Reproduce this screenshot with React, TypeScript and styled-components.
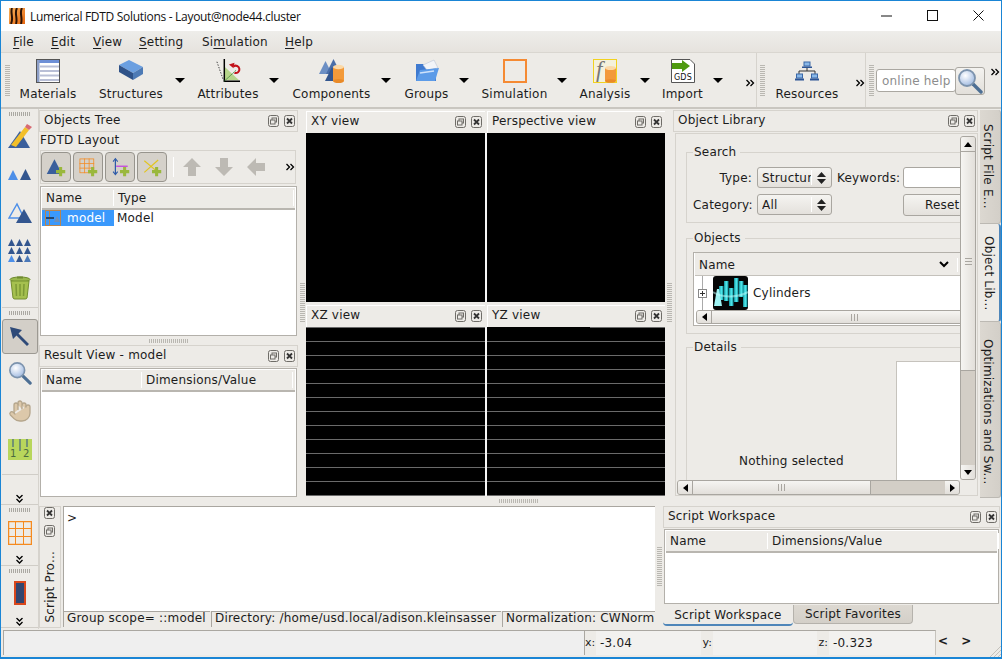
import React from 'react';
import styled, { createGlobalStyle } from 'styled-components';
import { Hand } from 'lucide-react';

const GlobalStyle = createGlobalStyle`
  html, body { margin: 0; padding: 0; background: #edebe7; overflow: hidden; }
  * { box-sizing: border-box; }
`;

const bg = '#edebe7';
const line = '#b3b0aa';
const soft = '#d6d3cd';

const Window = styled.div`
  width: 1002px;
  height: 659px;
  display: flex;
  flex-direction: column;
  overflow: hidden;
  border: 1px solid #1a85d5;
  border-bottom-width: 2px;
  background: ${bg};
  color: #1c1c1c;
  font: 12px/14px 'DejaVu Sans', sans-serif;
  letter-spacing: 0.2px;
`;

const TitleBar = styled.div`
  height: 30px;
  flex: none;
  display: flex;
  align-items: center;
  padding-left: 8px;
  gap: 5px;
  background: #fff;
  font: 12px 'Open Sans', sans-serif;
  letter-spacing: -0.3px;
  color: #111;
`;

const TitleText = styled.span`
  flex: 1;
`;

const WindowControls = styled.div`
  display: flex;
  align-items: center;
  gap: 35px;
  padding: 0 17px 2px 0;
  svg { display: block; }
`;

const MenuBar = styled.div`
  height: 22px;
  flex: none;
  display: flex;
  align-items: center;
  padding-left: 12px;
  background: linear-gradient(#eeedea, #e6e3de);
  border-bottom: 1px solid #d9d6d0;
`;

const MenuItem = styled.span<{ $w: number }>`
  width: ${(p) => p.$w}px;
  u { text-underline-offset: 2px; }
`;

const ToolBar = styled.div`
  height: 56px;
  flex: none;
  display: flex;
  align-items: stretch;
  border-bottom: 2px solid #c9c6c0;
`;

const ToolSection = styled.div<{ $w: number }>`
  width: ${(p) => p.$w}px;
  flex: none;
  display: flex;
  align-items: flex-start;
  border-right: 1px solid ${soft};
`;

const GripV = styled.div<{ $h?: number }>`
  width: 5px;
  height: ${(p) => p.$h ?? 31}px;
  flex: none;
  background: repeating-linear-gradient(#b9b7b1 0 1px, transparent 1px 2px);
`;

const GripH = styled.div<{ $mt?: number }>`
  width: 22px;
  height: 4px;
  flex: none;
  margin-top: ${(p) => p.$mt ?? 0}px;
  background: repeating-linear-gradient(90deg, #aaa8a2 0 1px, transparent 1px 2px);
`;

const ToolGripSlot = styled.div<{ $pl: number }>`
  padding: 12px 0 0 ${(p) => p.$pl}px;
  flex: none;
`;

const ToolItem = styled.div<{ $w: number; $ml?: number }>`
  width: ${(p) => p.$w}px;
  margin-left: ${(p) => p.$ml ?? 0}px;
  flex: none;
  display: flex;
  flex-direction: column;
  align-items: center;
  padding-top: 6px;
  gap: 4px;
  white-space: nowrap;
`;

const IconSlot = styled.div`
  height: 24px;
  flex: none;
  display: flex;
  align-items: center;
  justify-content: center;
  svg { display: block; overflow: visible; }
`;

const ToolLabel = styled.span`
  line-height: 15px;
`;

const DropArrow = styled.div<{ $ml: number }>`
  width: 0;
  height: 0;
  flex: none;
  margin: 25px 0 0 ${(p) => p.$ml}px;
  border-left: 5px solid transparent;
  border-right: 5px solid transparent;
  border-top: 5px solid #000;
`;

const OverflowSlot = styled.div<{ $ml: number; $mt?: number }>`
  margin: ${(p) => p.$mt ?? 26}px 0 0 ${(p) => p.$ml}px;
  flex: none;
  line-height: 0;
`;

const HelpInput = styled.div`
  width: 80px;
  height: 23px;
  margin: 16px 0 0 2px;
  flex: none;
  background: #fff;
  border: 1px solid #aaa7a1;
  border-radius: 3px;
  color: #8d8d8d;
  line-height: 23px;
  padding-left: 5px;
  white-space: nowrap;
`;

const HelpButton = styled.div`
  width: 30px;
  height: 28px;
  margin: 14px 0 0 -1px;
  flex: none;
  display: flex;
  align-items: center;
  justify-content: center;
  border: 1px solid #aaa7a1;
  border-radius: 3px;
  background: linear-gradient(#f4f3f0, #e2dfda);
`;

const Main = styled.div`
  height: 520px;
  flex: none;
  display: flex;
`;

const LeftColumn = styled.div`
  width: 38px;
  flex: none;
  display: flex;
  flex-direction: column;
  border-right: 1px solid ${soft};
`;

const RailSection = styled.div<{ $h: number }>`
  height: ${(p) => p.$h}px;
  flex: none;
  display: flex;
  flex-direction: column;
  align-items: center;
  padding-top: 3px;
  border-bottom: 1px solid #d0cdc7;
`;

const RailTool = styled.div<{ $h: number; $mt?: number; $active?: boolean }>`
  width: 36px;
  height: ${(p) => p.$h}px;
  margin-top: ${(p) => p.$mt ?? 0}px;
  flex: none;
  display: flex;
  align-items: center;
  justify-content: center;
  border-radius: 3px;
  ${(p) => (p.$active ? `background: #d3cfc8; border: 1px solid #9c9992;` : '')}
`;

const RailDivider = styled.div<{ $my: number }>`
  width: 36px;
  height: 1px;
  flex: none;
  margin: ${(p) => p.$my}px 0;
  background: #d0cdc7;
`;

const RailChevron = styled.div`
  margin-top: auto;
  padding-bottom: 1px;
  line-height: 0;
`;

const Center = styled.div`
  flex: 1;
  display: flex;
  flex-direction: column;
  min-width: 0;
`;

const UpperRow = styled.div`
  height: 388px;
  flex: none;
  display: flex;
`;

const ObjectsColumn = styled.div`
  width: 259px;
  flex: none;
  display: flex;
  flex-direction: column;
  padding-top: 1px;
`;

const DockTitle = styled.div`
  height: 22px;
  flex: none;
  display: flex;
  align-items: center;
  justify-content: space-between;
  padding: 0 2px 3px 4px;
  background: ${bg};
  border: 1px solid ${soft};
  white-space: nowrap;
`;

const DockButtons = styled.div`
  display: flex;
  gap: 5px;
  margin-top: 2px;
  svg { display: block; }
`;

const SubLabel = styled.div`
  height: 18px;
  flex: none;
  padding: 1px 0 0 1px;
`;

const ObjectsToolRow = styled.div`
  width: 256px;
  height: 34px;
  flex: none;
  margin-left: 1px;
  display: flex;
  align-items: center;
  border: 1px solid ${soft};
`;

const AddButton = styled.div`
  width: 30px;
  height: 30px;
  margin-right: 2px;
  flex: none;
  display: flex;
  align-items: center;
  justify-content: center;
  background: #d5d1ca;
  border: 1px solid #97948d;
  border-radius: 4px;
`;

const ToolSep = styled.div`
  width: 1px;
  height: 20px;
  margin: 0 9px 0 4px;
  flex: none;
  background: #fff;
`;

const GreyArrow = styled.div`
  width: 18px;
  margin-right: 14px;
  flex: none;
  line-height: 0;
`;

const RowEnd = styled.div`
  margin-left: auto;
  line-height: 0;
`;

const Tree = styled.div<{ $h: number; $w?: number; $mt?: number }>`
  width: ${(p) => p.$w ?? 257}px;
  height: ${(p) => p.$h}px;
  flex: none;
  margin: ${(p) => p.$mt ?? 0}px 0 0 1px;
  padding: 1px;
  display: flex;
  flex-direction: column;
  background: #fff;
  border: 1px solid ${line};
`;

const TreeHeader = styled.div`
  height: 22px;
  flex: none;
  display: flex;
  align-items: center;
  background: ${bg};
  border-bottom: 2px solid #b9b6b0;
`;

const HeaderCell = styled.div<{ $w: number }>`
  width: ${(p) => p.$w}px;
  flex: none;
  padding-left: 4px;
  border-right: 1px solid #fff;
  line-height: 16px;
  white-space: nowrap;
`;

const ModelRow = styled.div`
  display: flex;
  height: 16px;
  align-items: center;
  line-height: 16px;
`;

const SelectedCell = styled.div`
  width: 72px;
  height: 16px;
  flex: none;
  display: flex;
  align-items: center;
  gap: 6px;
  padding-left: 3px;
  background: #3a99fc;
  color: #fff;
`;

const ModelType = styled.span`
  padding-left: 3px;
`;

const Splitter = styled.div<{ $w: number }>`
  width: ${(p) => p.$w}px;
  flex: none;
  display: flex;
  align-items: center;
  justify-content: center;
`;

const HSplitter = styled.div`
  height: 8px;
  flex: none;
  display: flex;
  align-items: center;
  justify-content: center;
  padding-right: 2px;
`;

const HGrip = styled.div`
  width: 40px;
  height: 4px;
  background: repeating-linear-gradient(90deg, #b9b7b1 0 1px, transparent 1px 2px);
`;

const SplitterRowGap = styled.div`
  height: 9px;
  flex: none;
  display: flex;
  align-items: center;
  justify-content: center;
`;

const Views = styled.div`
  width: 359px;
  flex: none;
  padding-top: 2px;
  display: grid;
  grid-template-columns: 181px 178px;
  grid-template-rows: 191px 191px;
  row-gap: 3px;
`;

const ViewCell = styled.div`
  display: flex;
  flex-direction: column;
  min-height: 0;
`;

const ViewTitle = styled.div<{ $left?: boolean }>`
  height: 22px;
  flex: none;
  display: flex;
  align-items: center;
  justify-content: space-between;
  padding: 0 3px 3px 4px;
  margin-right: ${(p) => (p.$left ? 2 : 0)}px;
  border-top: 1px solid #fff;
  border-left: 1px solid #fff;
  white-space: nowrap;
`;

const Canvas = styled.div<{ $left?: boolean; $ruled?: boolean; $partial?: boolean }>`
  flex: 1;
  position: relative;
  background-color: #000;
  ${(p) => (p.$left ? 'border-right: 2px solid #f6f6f6;' : '')}
  ${(p) =>
    p.$ruled
      ? `background-image: linear-gradient(#6a6a6a 0 1px, #000 1px);
         background-size: 100% 14px;`
      : ''}
  ${(p) =>
    p.$partial
      ? `&::before {
           content: '';
           position: absolute;
           left: 0; top: 0;
           width: 103px; height: 1px;
           background: #000;
         }`
      : ''}
`;

const Library = styled.div`
  width: 305px;
  flex: none;
  display: flex;
  flex-direction: column;
  padding-top: 1px;
`;

const LibraryBody = styled.div`
  height: 363px;
  margin: 1px 0 0 2px;
  padding: 2px 1px 0 1px;
  display: grid;
  grid-template-columns: 283px 16px;
  grid-template-rows: 344px 15px;
  border: 1px solid ${soft};
`;

const LibraryContent = styled.div`
  overflow: hidden;
  padding: 9px 0 0 9px;
  display: flex;
  flex-direction: column;
  gap: 8px;
`;

const Group = styled.fieldset<{ $h: number; $mt?: number }>`
  width: 300px;
  height: ${(p) => p.$h}px;
  flex: none;
  margin: ${(p) => p.$mt ?? 0}px 0 0;
  padding: 0 0 0 6px;
  border: 1px solid ${soft};
  min-inline-size: 0;
`;

const GroupLegend = styled.legend`
  padding: 0 4px 0 1px;
  line-height: 14px;
`;

const SearchGrid = styled.div`
  display: grid;
  grid-template-columns: 59px 75px 61px 100px;
  grid-auto-rows: 21px;
  column-gap: 5px;
  row-gap: 6px;
  margin-top: 8px;
  align-items: center;
`;

const FormLabel = styled.span`
  text-align: right;
  white-space: nowrap;
`;

const Combo = styled.div`
  height: 21px;
  display: flex;
  align-items: center;
  justify-content: space-between;
  padding-left: 4px;
  overflow: hidden;
  white-space: nowrap;
  border: 1px solid #a9a6a0;
  border-radius: 3px;
  background: linear-gradient(#f5f4f1, #e4e1dc);
`;

const ComboText = styled.span`
  width: 50px;
  overflow: hidden;
`;

const ComboArrows = styled.span`
  width: 20px;
  height: 15px;
  flex: none;
  display: flex;
  align-items: center;
  justify-content: center;
  border-left: 1px solid #fff;
`;

const FieldInput = styled.div`
  height: 21px;
  background: #fff;
  border: 1px solid #a9a6a0;
  border-radius: 3px;
`;

const PushButton = styled.div`
  height: 22px;
  line-height: 20px;
  text-align: left;
  padding-left: 21px;
  border: 1px solid #a9a6a0;
  border-radius: 3px;
  background: linear-gradient(#f5f4f1, #e4e1dc);
`;

const ObjectsTree = styled.div`
  width: 290px;
  height: 74px;
  margin-top: 7px;
  display: flex;
  flex-direction: column;
  border: 1px solid ${line};
  background: #fff;
  padding: 0 1px;
`;

const ObjectsHeader = styled.div`
  height: 23px;
  flex: none;
  display: flex;
  align-items: center;
  padding: 1px 0 0 4px;
  background: ${bg};
  border-bottom: 1px solid #c4c1bb;
`;

const HeaderName = styled.span`
  width: 240px;
  flex: none;
`;

const HeaderRest = styled.span`
  margin-left: 8px;
  padding-left: 4px;
  border-left: 1px solid #fff;
`;

const CylinderRow = styled.div`
  height: 34px;
  flex: none;
  display: flex;
  align-items: center;
  gap: 5px;
  padding-left: 3px;
  svg { display: block; flex: none; }
`;

const Expander = styled.div`
  width: 10px;
  height: 34px;
  flex: none;
  display: flex;
  align-items: center;
  background: linear-gradient(#aaa, #aaa) 4px 0 / 1px 100% no-repeat;
`;

const PlusBox = styled.div`
  width: 9px;
  height: 9px;
  background: #fff linear-gradient(#333, #333) center / 5px 1px no-repeat;
  border: 1px solid #888;
  position: relative;
  &::after {
    content: '';
    position: absolute;
    left: 3px; top: 1px;
    width: 1px; height: 5px;
    background: #333;
  }
`;

const InnerScroll = styled.div`
  height: 14px;
  flex: none;
  margin: 0 1px;
  display: flex;
  background: #d3cec6;
  border: 1px solid #a9a6a0;
  border-radius: 3px;
  overflow: hidden;
`;

const DetailsRow = styled.div`
  display: flex;
  margin: 7px 0 0 -6px;
`;

const DetailsText = styled.div`
  width: 209px;
  height: 119px;
  flex: none;
  display: flex;
  align-items: flex-end;
  justify-content: center;
  padding-bottom: 12px;
`;

const DetailsPane = styled.div`
  width: 90px;
  height: 119px;
  flex: none;
  background: #fff;
  border: 1px solid #c6c3bd;
  border-right: none;
  border-bottom: none;
`;

const Scroll = styled.div<{ $vertical?: boolean }>`
  display: flex;
  flex-direction: ${(p) => (p.$vertical ? 'column' : 'row')};
  background: #d3cec6;
  border: 1px solid #a9a6a0;
  border-radius: 3px;
  overflow: hidden;
`;

const ScrollBtn = styled.div<{ $vertical?: boolean }>`
  ${(p) => (p.$vertical ? 'height: 14px;' : 'width: 14px;')}
  flex: none;
  display: flex;
  align-items: center;
  justify-content: center;
  background: ${(p) =>
    p.$vertical ? 'linear-gradient(90deg, #f6f5f2, #e2dfda)' : 'linear-gradient(#f6f5f2, #e2dfda)'};
`;

const ScrollHandle = styled.div<{ $vertical?: boolean; $size: number }>`
  ${(p) => (p.$vertical ? `height: ${p.$size}px;` : `width: ${p.$size}px;`)}
  flex: none;
  display: flex;
  align-items: center;
  justify-content: center;
  background: ${(p) =>
    p.$vertical ? 'linear-gradient(90deg, #f6f5f2, #e2dfda)' : 'linear-gradient(#f6f5f2, #e2dfda)'};
  ${(p) =>
    p.$vertical
      ? 'border-top: 1px solid #a9a6a0; border-bottom: 1px solid #a9a6a0;'
      : 'border-left: 1px solid #a9a6a0; border-right: 1px solid #a9a6a0;'}
`;

const ScrollTrough = styled.div`
  flex: 1;
`;

const ScrollGrip = styled.div<{ $vertical?: boolean }>`
  width: 7px;
  height: 7px;
  background: repeating-linear-gradient(${(p) => (p.$vertical ? '0deg' : '90deg')}, #a9a6a0 0 1px, transparent 1px 3px);
`;

const RightTabs = styled.div`
  width: 21px;
  margin-left: 2px;
  flex: none;
  display: flex;
  flex-direction: column;
  padding-top: 1px;
`;

const SideTab = styled.div<{ $h: number; $pt: number; $active?: boolean }>`
  height: ${(p) => p.$h}px;
  flex: none;
  writing-mode: vertical-rl;
  padding-top: ${(p) => p.$pt}px;
  padding-right: ${(p) => (p.$active ? 0 : 2)}px;
  line-height: 20px;
  white-space: nowrap;
  background: ${(p) => (p.$active ? bg : 'linear-gradient(90deg, #dcd8d1, #d3cfc8)')};
  border-radius: 0 3px 3px 0;
  border-bottom: 1px solid #bcb9b3;
  ${(p) => (p.$active ? 'border-right: 2px solid #4f86b9;' : 'border-right: 1px solid #b5b2ac;')}
`;

const LowerRow = styled.div`
  flex: 1;
  display: flex;
  min-height: 0;
`;

const ScriptDock = styled.div`
  width: 22px;
  height: 122px;
  flex: none;
  margin-top: 1px;
  display: flex;
  flex-direction: column;
  align-items: center;
  padding-right: 1px;
  gap: 6px;
  border: 1px solid ${soft};
  svg { display: block; }
`;

const VerticalTitle = styled.div`
  writing-mode: vertical-rl;
  transform: rotate(180deg);
  white-space: nowrap;
  margin-top: auto;
  padding-top: 5px;
  line-height: 18px;
`;

const ScriptBody = styled.div`
  width: 592px;
  flex: none;
  margin: 1px 0 0 2px;
  display: flex;
  flex-direction: column;
`;

const Prompt = styled.div`
  height: 105px;
  flex: none;
  background: #fff;
  border-top: 1px solid #a9a6a0;
  border-left: 1px solid #a9a6a0;
  padding: 4px 0 0 3px;
`;

const ScriptStatus = styled.div`
  height: 16px;
  flex: none;
  display: flex;
  gap: 1px;
`;

const ScriptStatusCell = styled.div<{ $w: number }>`
  width: ${(p) => p.$w}px;
  flex: none;
  overflow: hidden;
  white-space: nowrap;
  padding-left: 3px;
  line-height: 12px;
  border-top: 1px solid #a9a6a0;
  border-left: 1px solid #a9a6a0;
`;

const Workspace = styled.div`
  width: 337px;
  flex: none;
  display: flex;
  flex-direction: column;
  margin-top: 1px;
`;

const BottomTabs = styled.div`
  display: flex;
  align-items: flex-start;
  margin-top: 1px;
`;

const BottomTab = styled.div<{ $w: number; $active?: boolean }>`
  width: ${(p) => p.$w}px;
  flex: none;
  text-align: center;
  border-radius: 0 0 4px 4px;
  ${(p) =>
    p.$active
      ? `height: 21px; line-height: 20px; background: ${bg}; border-bottom: 2px solid #4f86b9;`
      : `height: 19px; line-height: 18px; background: linear-gradient(#dcd8d1, #d3cfc8); border: 1px solid #b5b2ac; border-top: none;`}
`;

const StatusBar = styled.div`
  flex: 1;
  display: flex;
  align-items: stretch;
  padding: 0 0 0 2px;
  position: relative;
`;

const StatusMessage = styled.div`
  width: 581px;
  flex: none;
  margin: 1px 0 3px;
  background: #efefef;
  border-top: 1px solid #aaa7a1;
  border-left: 1px solid #aaa7a1;
`;

const Coordinates = styled.div`
  width: 352px;
  flex: none;
  margin: 1px 0 3px;
  display: flex;
  align-items: center;
  background: #f2f1ef;
  border-top: 1px solid #aaa7a1;
  border-left: 1px solid #aaa7a1;
  border-right: 1px solid #c6c3bd;
`;

const CoordField = styled.div<{ $w: number }>`
  width: ${(p) => p.$w}px;
  flex: none;
  display: flex;
  align-items: center;
  height: 100%;
`;

const CoordLabel = styled.span<{ $w: number }>`
  width: ${(p) => p.$w}px;
  flex: none;
  text-align: right;
  padding-right: 1px;
  height: 100%;
  line-height: 24px;
  background: ${bg};
  font-size: 11px;
  letter-spacing: 0;
`;

const CoordValue = styled.span`
  padding-left: 4px;
`;

const Pager = styled.div`
  display: flex;
  align-items: center;
  gap: 13px;
  padding: 0 0 5px 2px;
  font-weight: 700;
`;

const SizeGrip = styled.svg`
  position: absolute;
  right: 0;
  bottom: 0;
`;

/* icons */

const Float = () => (
  <svg width="11" height="12" viewBox="0 0 11 12" fill="none" stroke="#6f6d68">
    <rect x="0.5" y="0.5" width="10" height="11" rx="2" />
    <rect x="4" y="3" width="4.5" height="4" />
    <rect x="2.5" y="5" width="4.5" height="4" fill="#edebe7" />
  </svg>
);

const Close = () => (
  <svg width="11" height="12" viewBox="0 0 11 12" fill="none">
    <rect x="0.5" y="0.5" width="10" height="11" rx="2" stroke="#6f6d68" />
    <path d="M3 3.5l5 5M8 3.5l-5 5" stroke="#333" strokeWidth="1.8" />
  </svg>
);

const DockIcons = () => (
  <DockButtons>
    <Float />
    <Close />
  </DockButtons>
);

const Chevrons = ({ down }: { down?: boolean }) => (
  <svg width="9" height="8" viewBox="0 0 9 8" fill="none" stroke="#000" strokeWidth="1.3" style={down ? { transform: 'rotate(90deg)' } : undefined}>
    <path d="M0.5 1l3 3-3 3M4.5 1l3 3-3 3" />
  </svg>
);

const SortChevron = () => (
  <svg width="10" height="7" viewBox="0 0 10 7" fill="none" stroke="#000" strokeWidth="2">
    <path d="M1 1l4 4 4-4" />
  </svg>
);

const Tri = ({ x, y, s, c }: { x: number; y: number; s: number; c: string }) => (
  <polygon points={`${x},${y + s} ${x + s / 2},${y} ${x + s},${y + s}`} fill={c} />
);

const Logo = () => (
  <svg width="16" height="16" viewBox="0 0 16 16">
    <defs>
      <linearGradient id="flame" x1="0" y1="0" x2="1" y2="1">
        <stop offset="0" stopColor="#f7b25c" />
        <stop offset="1" stopColor="#e8660f" />
      </linearGradient>
    </defs>
    <rect width="16" height="16" fill="url(#flame)" />
    <path d="M2 16C5 10 1 5 3 0M7 16C9 10 5 5 8 0M12 16C14 9 10 5 13 0" stroke="#2a1206" strokeWidth="2" fill="none" />
  </svg>
);

const Magnifier = ({ size = 26, id }: { size?: number; id: string }) => (
  <svg width={size} height={size} viewBox="0 0 26 26">
    <defs>
      <radialGradient id={id} cx="0.4" cy="0.35" r="0.7">
        <stop offset="0" stopColor="#ffffff" />
        <stop offset="1" stopColor="#9db8e0" />
      </radialGradient>
    </defs>
    <path d="M16 16l8 8" stroke="#4d6f94" strokeWidth="3.4" strokeLinecap="round" />
    <circle cx="10" cy="10" r="8" fill={`url(#${id})`} stroke="#7c93ad" strokeWidth="1.8" />
  </svg>
);

const MaterialsIcon = () => (
  <svg width="24" height="24" viewBox="0 0 24 24">
    <rect x="0.5" y="0.5" width="23" height="23" fill="#fff" stroke="#555" />
    <rect x="1" y="1" width="22" height="3" fill="#6d8fd6" />
    <rect x="1" y="1" width="2.5" height="22" fill="#8ea0c8" />
    <path d="M4 7.5h19M4 12h19M4 16.5h19M4 21h19" stroke="#b9bfd6" strokeWidth="2" />
  </svg>
);

const StructuresIcon = () => (
  <svg width="24" height="24" viewBox="0 0 24 24">
    <polygon points="0,6 10,1 24,8 14,14" fill="#6b9fe0" />
    <polygon points="0,6 14,14 14,21 0,13" fill="#2f5288" />
    <polygon points="14,14 24,8 24,15 14,21" fill="#4d7ab5" />
  </svg>
);

const AttributesIcon = () => (
  <svg width="24" height="24" viewBox="0 0 26 26">
    <polygon points="9,23 9,8 25,23" fill="#b5d48a" />
    <path d="M9 0v24h17" stroke="#000" strokeWidth="1.6" fill="none" />
    <path d="M1 3l7 20" stroke="#333" strokeWidth="1" strokeDasharray="1.5 1.5" />
    <path d="M9 24L22 12" stroke="#2d7a2d" strokeWidth="1" strokeDasharray="2 1" />
    <path d="M19 8a4 4 0 1 1 1 7" stroke="#c3121a" strokeWidth="2.2" fill="none" />
    <polygon points="14,6 20,4 19,10" fill="#c3121a" />
  </svg>
);

const ComponentsIcon = () => (
  <svg width="25" height="24" viewBox="0 0 25 24">
    <Tri x={0} y={2} s={13} c="#6c8fc4" />
    <Tri x={7} y={0} s={15} c="#4a6ea8" />
    <Tri x={6} y={8} s={14} c="#33568f" />
    <rect x="14" y="8" width="11" height="14" fill="#f39a3a" />
    <ellipse cx="19.5" cy="22" rx="5.5" ry="2" fill="#e98a28" />
    <ellipse cx="19.5" cy="8" rx="5.5" ry="2.2" fill="#fbd9a8" />
  </svg>
);

const GroupsIcon = () => (
  <svg width="24" height="24" viewBox="0 0 24 24">
    <path d="M1 5h7l2 2h11v15H1z" fill="#3f7ad0" />
    <polygon points="8,6 19,1 23,9 12,11" fill="#f2f4f8" stroke="#b9c4d6" strokeWidth="0.6" />
    <polygon points="5,11 24,9 20,22 1,22" fill="#5c9be8" />
    <path d="M5 14l14-2" stroke="#cfe2fa" strokeWidth="1.6" />
  </svg>
);

const SimulationIcon = () => (
  <svg width="24" height="24" viewBox="0 0 24 24">
    <rect x="1" y="1" width="22" height="22" fill="none" stroke="#f58a33" strokeWidth="2" />
  </svg>
);

const AnalysisIcon = () => (
  <svg width="24" height="24" viewBox="0 0 24 24">
    <rect x="0.5" y="0.5" width="23" height="23" fill="#f4f1dc" stroke="#f2d21f" />
    <text x="3" y="18" fontFamily="'Liberation Serif', serif" fontStyle="italic" fontSize="23" fill="#777">f</text>
    <rect x="12" y="9" width="11" height="13" fill="#f39a3a" />
    <ellipse cx="17.5" cy="22" rx="5.5" ry="1.8" fill="#e98a28" />
    <ellipse cx="17.5" cy="9" rx="5.5" ry="2" fill="#fbd9a8" />
  </svg>
);

const ImportIcon = () => (
  <svg width="24" height="24" viewBox="0 0 24 24">
    <path d="M0.5 0.5H19L23.5 5V23.5H0.5z" fill="#fff" stroke="#555" />
    <path d="M1 4h10V1l8 6-8 6v-3H1z" fill="#4f9a10" />
    <text x="12" y="21" textAnchor="middle" fontFamily="'DejaVu Sans', sans-serif" fontSize="8" fill="#111">GDS</text>
  </svg>
);

const ResourcesIcon = () => (
  <svg width="24" height="20" viewBox="0 0 24 20">
    <rect x="9" y="1" width="6" height="4" fill="#8ab8e8" stroke="#3a68a8" />
    <rect x="7" y="5.5" width="10" height="1.5" fill="#2c5596" />
    <path d="M12 7v3M4 13v-3h16v3" stroke="#333" fill="none" />
    <rect x="1.5" y="13" width="6" height="4" fill="#8ab8e8" stroke="#3a68a8" />
    <rect x="16.5" y="13" width="6" height="4" fill="#8ab8e8" stroke="#3a68a8" />
    <rect x="0" y="17.5" width="9" height="2" fill="#2c5596" />
    <rect x="15" y="17.5" width="9" height="2" fill="#2c5596" />
  </svg>
);

const PencilTriangle = () => (
  <svg width="24" height="26" viewBox="0 0 24 26">
    <polygon points="0,24 12,7 22,24" fill="#3a5f9c" />
    <polygon points="3,21 17,3 21,6 8,23" fill="#f2bf2a" />
    <polygon points="17,3 19,0 24,3 21,6" fill="#d86a72" />
  </svg>
);

const TwoTriangles = () => (
  <svg width="24" height="12" viewBox="0 0 24 12">
    <Tri x={0} y={1} s={10} c="#4d8fe8" />
    <Tri x={12} y={0} s={11} c="#33568f" />
  </svg>
);

const OutlineTriangles = () => (
  <svg width="24" height="22" viewBox="0 0 24 22">
    <polygon points="1,16 9,2 16,16" fill="none" stroke="#4d8fe8" strokeWidth="1.5" />
    <polygon points="8,21 16,7 24,21" fill="#33568f" />
  </svg>
);

const ManyTriangles = () => (
  <svg width="24" height="24" viewBox="0 0 24 24">
    {[0, 1, 2].map((r) =>
      [0, 1, 2].map((c) => (
        <Tri key={`${r}${c}`} x={c * 8} y={r * 8 + 1} s={7} c={r === 2 && c === 0 ? '#4d8fe8' : r === 2 && c === 2 ? '#4a78b8' : '#33568f'} />
      ))
    )}
  </svg>
);

const TrashIcon = () => (
  <svg width="22" height="24" viewBox="0 0 22 24">
    <ellipse cx="11" cy="3.5" rx="10" ry="2.5" fill="#9ab84c" stroke="#6f8a2e" />
    <path d="M8 1.5h6" stroke="#6f8a2e" strokeWidth="2" />
    <path d="M2 5h18l-2 17a2 2 0 0 1-2 1H6a2 2 0 0 1-2-1z" fill="#a5c04f" stroke="#748f30" />
    <path d="M7 8l.5 12M11 8v12M15 8l-.5 12" stroke="#7d9936" strokeWidth="1.5" />
  </svg>
);

const PointerIcon = () => (
  <svg width="20" height="20" viewBox="0 0 20 20">
    <polygon points="0,0 12,3 8.5,6.5 19,17 17,19 6.5,8.5 3,12" fill="#2e4a78" />
  </svg>
);

const RulerIcon = () => (
  <svg width="24" height="21" viewBox="0 0 24 21">
    <rect width="24" height="21" fill="#b8d65c" />
    <path d="M5 0v8M12 0v12M19 0v8" stroke="#2d4f8a" />
    <text x="2" y="18" fontFamily="'DejaVu Sans', sans-serif" fontSize="10" fill="#4a6a40">1</text>
    <text x="15" y="18" fontFamily="'DejaVu Sans', sans-serif" fontSize="10" fill="#4a6a40">2</text>
  </svg>
);

const OrangeGrid = () => (
  <svg width="24" height="24" viewBox="0 0 24 24" fill="none" stroke="#f58a1f">
    <rect x="0.5" y="0.5" width="23" height="23" strokeWidth="1.5" />
    <path d="M0 7.5h24M0 15.5h24M7.5 0v24M15.5 0v24" />
  </svg>
);

const BarIcon = () => (
  <svg width="12" height="24" viewBox="0 0 12 24">
    <rect x="1" y="1" width="10" height="22" fill="#33466f" stroke="#d9471c" strokeWidth="2" />
  </svg>
);

const Plus = () => <path d="M17 13h4v4h4v4h-4v4h-4v-4h-4v-4h4z" fill="#9ab83c" stroke="none" />;

const AddTriangle = () => (
  <svg width="20" height="20" viewBox="0 0 26 26">
    <polygon points="1,22 11,3 21,22" fill="#3a5f9c" />
    <Plus />
  </svg>
);

const AddGrid = () => (
  <svg width="20" height="20" viewBox="0 0 26 26" fill="none" stroke="#f58a1f">
    <rect x="2.5" y="2.5" width="18" height="18" />
    <path d="M2 8.5h19M2 14.5h19M8.5 2v19M14.5 2v19" />
    <Plus />
  </svg>
);

const AddSpan = () => (
  <svg width="20" height="20" viewBox="0 0 26 26" fill="none">
    <path d="M7 3v19" stroke="#2d5aa8" strokeWidth="1.6" />
    <path d="M4 6l3-4 3 4M4 19l3 4 3-4" stroke="#2d5aa8" strokeWidth="1.4" />
    <path d="M8 12h15" stroke="#c23de0" strokeWidth="1.6" />
    <Plus />
  </svg>
);

const AddCross = () => (
  <svg width="20" height="20" viewBox="0 0 26 26" fill="none">
    <path d="M3 5l18 15M21 4L3 20" stroke="#e2c520" strokeWidth="1.6" />
    <Plus />
  </svg>
);

const UpArrow = ({ rotate = 0 }: { rotate?: number }) => (
  <svg width="18" height="18" viewBox="0 0 18 18" style={{ transform: `rotate(${rotate}deg)` }}>
    <path d="M9 0l9 9h-5v9H5V9H0z" fill="#bdbab4" />
  </svg>
);

const ModelIcon = () => (
  <svg width="16" height="16" viewBox="0 0 16 16" fill="none">
    <rect x="0.5" y="0.5" width="15" height="15" stroke="#b8854f" />
    <path d="M4.5 0v16" stroke="#b8854f" />
    <path d="M1 8h8" stroke="#24466f" strokeWidth="2" />
    <polygon points="9,12 12,6 15,12" fill="#6f8fb8" />
  </svg>
);

const Cylinders = () => (
  <svg width="35" height="34" viewBox="0 0 35 34">
    <defs>
      <linearGradient id="tube" x1="0" y1="0" x2="1" y2="0">
        <stop offset="0" stopColor="#0f8d98" />
        <stop offset="0.5" stopColor="#53eef0" />
        <stop offset="1" stopColor="#0f8d98" />
      </linearGradient>
    </defs>
    <rect width="35" height="34" rx="3" fill="#060606" />
    {[
      [6, 10, 14],
      [11, 5, 20],
      [16, 12, 18],
      [21, 2, 24],
      [26, 5, 16],
      [30, 9, 22],
    ].map(([x, y, h]) => (
      <rect key={x} x={x} y={y} width="4.5" height={h} fill="url(#tube)" />
    ))}
    <polygon points="1,30 4,13 6,13 9,30" fill="#9ff2f2" />
    <path d="M0 16c10 6 24 6 35 0" stroke="#c6ffff" strokeWidth="2" fill="none" opacity="0.5" />
  </svg>
);

const TinyArrow = ({ dir }: { dir: 'up' | 'down' | 'left' | 'right' }) => {
  const points = { up: '0,5 4,0 8,5', down: '0,0 8,0 4,5', left: '5,0 5,8 0,4', right: '0,0 0,8 5,4' }[dir];
  const vertical = dir === 'up' || dir === 'down';
  return (
    <svg width={vertical ? 8 : 5} height={vertical ? 5 : 8}>
      <polygon points={points} fill="#000" />
    </svg>
  );
};

const ComboUpDown = () => (
  <ComboArrows>
    <svg width="9" height="12" viewBox="0 0 9 12">
      <polygon points="0,5 4.5,0 9,5" fill="#222" />
      <polygon points="0,7 9,7 4.5,12" fill="#222" />
    </svg>
  </ComboArrows>
);

const menu: [string, string, number][] = [
  ['F', 'ile', 38],
  ['E', 'dit', 42],
  ['V', 'iew', 46],
  ['S', 'etting', 63],
];

const tools = [
  { label: 'Materials', icon: <MaterialsIcon />, w: 58, ml: 9, arrow: 0 },
  { label: 'Structures', icon: <StructuresIcon />, w: 66, ml: 21, arrow: 11 },
  { label: 'Attributes', icon: <AttributesIcon />, w: 62, ml: 12, arrow: 10 },
  { label: 'Components', icon: <ComponentsIcon />, w: 79, ml: 13, arrow: 10 },
  { label: 'Groups', icon: <GroupsIcon />, w: 45, ml: 13, arrow: 10 },
  { label: 'Simulation', icon: <SimulationIcon />, w: 65, ml: 13, arrow: 10 },
  { label: 'Analysis', icon: <AnalysisIcon />, w: 50, ml: 13, arrow: 10 },
  { label: 'Import', icon: <ImportIcon />, w: 39, ml: 13, arrow: 11 },
];

export default function App() {
  return (
    <>
      <GlobalStyle />
      <Window>
        <TitleBar>
          <Logo />
          <TitleText>Lumerical FDTD Solutions - Layout@node44.cluster</TitleText>
          <WindowControls>
            <svg width="11" height="11"><path d="M0 6h11" stroke="#111" /></svg>
            <svg width="11" height="11"><rect x="0.5" y="0.5" width="10" height="10" fill="none" stroke="#111" /></svg>
            <svg width="11" height="11"><path d="M0.5 0.5l10 10M10.5 0.5l-10 10" stroke="#111" /></svg>
          </WindowControls>
        </TitleBar>

        <MenuBar>
          {menu.map(([u, rest, w]) => (
            <MenuItem key={u} $w={w}><u>{u}</u>{rest}</MenuItem>
          ))}
          <MenuItem $w={83}>Si<u>m</u>ulation</MenuItem>
          <MenuItem $w={40}><u>H</u>elp</MenuItem>
        </MenuBar>

        <ToolBar>
          <ToolSection $w={756}>
            <ToolGripSlot $pl={4}><GripV /></ToolGripSlot>
            {tools.map((t) => (
              <React.Fragment key={t.label}>
                <ToolItem $w={t.w} $ml={t.ml}>
                  <IconSlot>{t.icon}</IconSlot>
                  <ToolLabel>{t.label}</ToolLabel>
                </ToolItem>
                {t.arrow > 0 && <DropArrow $ml={t.arrow} />}
              </React.Fragment>
            ))}
            <OverflowSlot $ml={23}><Chevrons /></OverflowSlot>
          </ToolSection>
          <ToolSection $w={109}>
            <ToolGripSlot $pl={3}><GripV /></ToolGripSlot>
            <ToolItem $w={66} $ml={9}>
              <IconSlot><ResourcesIcon /></IconSlot>
              <ToolLabel>Resources</ToolLabel>
            </ToolItem>
            <OverflowSlot $ml={16}><Chevrons /></OverflowSlot>
          </ToolSection>
          <ToolGripSlot $pl={3}><GripV /></ToolGripSlot>
          <HelpInput>online help</HelpInput>
          <HelpButton><Magnifier size={26} id="lens-help" /></HelpButton>
          <OverflowSlot $ml={6} $mt={15}><Chevrons /></OverflowSlot>
        </ToolBar>

        <Main>
          <LeftColumn>
            <RailSection $h={396}>
              <GripH />
              <RailTool $h={38} $mt={2}><PencilTriangle /></RailTool>
              <RailTool $h={38}><TwoTriangles /></RailTool>
              <RailTool $h={37}><OutlineTriangles /></RailTool>
              <RailTool $h={38}><ManyTriangles /></RailTool>
              <RailTool $h={38}><TrashIcon /></RailTool>
              <RailDivider $my={0} />
              <GripH $mt={3} />
              <RailTool $h={35} $mt={4} $active><PointerIcon /></RailTool>
              <RailTool $h={38}><Magnifier size={24} id="lens-rail" /></RailTool>
              <RailTool $h={38}><Hand size={24} fill="#dcc8aa" stroke="#b5a68c" strokeWidth={1.3} /></RailTool>
              <RailTool $h={38}><RulerIcon /></RailTool>
              <RailDivider $my={6} />
              <RailChevron><Chevrons down /></RailChevron>
            </RailSection>
            <RailSection $h={61}>
              <GripH />
              <RailTool $h={36} $mt={3}><OrangeGrid /></RailTool>
              <RailChevron><Chevrons down /></RailChevron>
            </RailSection>
            <RailSection $h={62}>
              <GripH />
              <RailTool $h={36} $mt={2}><BarIcon /></RailTool>
              <RailChevron><Chevrons down /></RailChevron>
            </RailSection>
          </LeftColumn>

          <Center>
            <UpperRow>
              <ObjectsColumn>
                <DockTitle>Objects Tree<DockIcons /></DockTitle>
                <SubLabel>FDTD Layout</SubLabel>
                <ObjectsToolRow>
                  <AddButton><AddTriangle /></AddButton>
                  <AddButton><AddGrid /></AddButton>
                  <AddButton><AddSpan /></AddButton>
                  <AddButton><AddCross /></AddButton>
                  <ToolSep />
                  <GreyArrow><UpArrow /></GreyArrow>
                  <GreyArrow><UpArrow rotate={180} /></GreyArrow>
                  <GreyArrow><UpArrow rotate={-90} /></GreyArrow>
                  <RowEnd><Chevrons /></RowEnd>
                </ObjectsToolRow>
                <Tree $h={150} $mt={2}>
                  <TreeHeader>
                    <HeaderCell $w={72}>Name</HeaderCell>
                    <HeaderCell $w={180}>Type</HeaderCell>
                  </TreeHeader>
                  <ModelRow>
                    <SelectedCell><ModelIcon />model</SelectedCell>
                    <ModelType>Model</ModelType>
                  </ModelRow>
                </Tree>
                <SplitterRowGap><HGrip /></SplitterRowGap>
                <DockTitle>Result View - model<DockIcons /></DockTitle>
                <Tree $h={129} $mt={1}>
                  <TreeHeader>
                    <HeaderCell $w={100}>Name</HeaderCell>
                    <HeaderCell $w={151}>Dimensions/Value</HeaderCell>
                  </TreeHeader>
                </Tree>
              </ObjectsColumn>

              <Splitter $w={8}><GripV $h={40} /></Splitter>

              <Views>
                <ViewCell>
                  <ViewTitle $left>XY view<DockIcons /></ViewTitle>
                  <Canvas $left />
                </ViewCell>
                <ViewCell>
                  <ViewTitle>Perspective view<DockIcons /></ViewTitle>
                  <Canvas />
                </ViewCell>
                <ViewCell>
                  <ViewTitle $left>XZ view<DockIcons /></ViewTitle>
                  <Canvas $left $ruled />
                </ViewCell>
                <ViewCell>
                  <ViewTitle>YZ view<DockIcons /></ViewTitle>
                  <Canvas $ruled $partial />
                </ViewCell>
              </Views>

              <Splitter $w={8}><GripV $h={40} /></Splitter>

              <Library>
                <DockTitle>Object Library<DockIcons /></DockTitle>
                <LibraryBody>
                  <LibraryContent>
                    <Group $h={78}>
                      <GroupLegend>Search</GroupLegend>
                      <SearchGrid>
                        <FormLabel>Type:</FormLabel>
                        <Combo><ComboText>Structures</ComboText><ComboUpDown /></Combo>
                        <FormLabel>Keywords:</FormLabel>
                        <FieldInput />
                        <FormLabel>Category:</FormLabel>
                        <Combo><ComboText>All</ComboText><ComboUpDown /></Combo>
                        <span />
                        <PushButton>Reset</PushButton>
                      </SearchGrid>
                    </Group>
                    <Group $h={103}>
                      <GroupLegend>Objects</GroupLegend>
                      <ObjectsTree>
                        <ObjectsHeader>
                          <HeaderName>Name</HeaderName>
                          <SortChevron />
                          <HeaderRest>D</HeaderRest>
                        </ObjectsHeader>
                        <CylinderRow>
                          <Expander><PlusBox /></Expander>
                          <Cylinders />
                          Cylinders
                        </CylinderRow>
                        <InnerScroll>
                          <ScrollBtn><TinyArrow dir="left" /></ScrollBtn>
                          <ScrollHandle $size={286}><ScrollGrip /></ScrollHandle>
                        </InnerScroll>
                      </ObjectsTree>
                    </Group>
                    <Group $h={160} $mt={-2}>
                      <GroupLegend>Details</GroupLegend>
                      <DetailsRow>
                        <DetailsText>Nothing selected</DetailsText>
                        <DetailsPane />
                      </DetailsRow>
                    </Group>
                  </LibraryContent>
                  <Scroll $vertical>
                    <ScrollBtn $vertical><TinyArrow dir="up" /></ScrollBtn>
                    <ScrollHandle $vertical $size={220}><ScrollGrip $vertical /></ScrollHandle>
                    <ScrollTrough />
                    <ScrollBtn $vertical><TinyArrow dir="down" /></ScrollBtn>
                  </Scroll>
                  <Scroll>
                    <ScrollBtn><TinyArrow dir="left" /></ScrollBtn>
                    <ScrollHandle $size={179}><ScrollGrip /></ScrollHandle>
                    <ScrollTrough />
                    <ScrollBtn><TinyArrow dir="right" /></ScrollBtn>
                  </Scroll>
                </LibraryBody>
              </Library>

              <RightTabs>
                <SideTab $h={114} $pt={14}>Script File E...</SideTab>
                <SideTab $h={98} $pt={12} $active>Object Lib...</SideTab>
                <SideTab $h={176} $pt={17}>Optimizations and Sw...</SideTab>
              </RightTabs>
            </UpperRow>

            <HSplitter><HGrip /></HSplitter>

            <LowerRow>
              <ScriptDock>
                <Close />
                <Float />
                <VerticalTitle>Script Pro...</VerticalTitle>
              </ScriptDock>
              <ScriptBody>
                <Prompt>&gt;</Prompt>
                <ScriptStatus>
                  <ScriptStatusCell $w={147}>Group scope= ::model</ScriptStatusCell>
                  <ScriptStatusCell $w={290}>Directory: /home/usd.local/adison.kleinsasser</ScriptStatusCell>
                  <ScriptStatusCell $w={153}>Normalization: CWNorm</ScriptStatusCell>
                </ScriptStatus>
              </ScriptBody>
              <Splitter $w={8}><GripV $h={40} /></Splitter>
              <Workspace>
                <DockTitle>Script Workspace<DockIcons /></DockTitle>
                <Tree $h={75} $w={335} $mt={1}>
                  <TreeHeader>
                    <HeaderCell $w={102}>Name</HeaderCell>
                    <HeaderCell $w={231}>Dimensions/Value</HeaderCell>
                  </TreeHeader>
                </Tree>
                <BottomTabs>
                  <BottomTab $w={130} $active>Script Workspace</BottomTab>
                  <BottomTab $w={120}>Script Favorites</BottomTab>
                </BottomTabs>
              </Workspace>
            </LowerRow>
          </Center>
        </Main>

        <StatusBar>
          <StatusMessage />
          <Coordinates>
            <CoordField $w={116}><CoordLabel $w={11}>x:</CoordLabel><CoordValue>-3.04</CoordValue></CoordField>
            <CoordField $w={116}><CoordLabel $w={12}>y:</CoordLabel><CoordValue /></CoordField>
            <CoordField $w={118}><CoordLabel $w={12}>z:</CoordLabel><CoordValue>-0.323</CoordValue></CoordField>
          </Coordinates>
          <Pager><span>&lt;</span><span>&gt;</span></Pager>
          <SizeGrip width="14" height="14" viewBox="0 0 14 14" stroke="#c4c1bb">
            <path d="M14 2L2 14M14 6L6 14M14 10l-4 4" />
          </SizeGrip>
        </StatusBar>
      </Window>
    </>
  );
}
